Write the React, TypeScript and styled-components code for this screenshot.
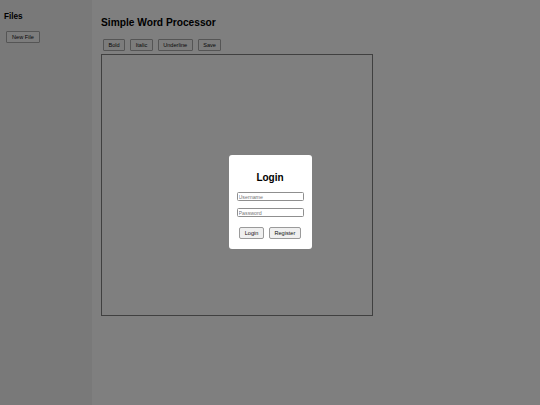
import styled, { createGlobalStyle } from "styled-components";

const GlobalStyle = createGlobalStyle`
  html, body {
    margin: 0;
    padding: 0;
    font-family: "Liberation Sans", Arial, sans-serif;
  }
`;

const Layout = styled.div`
  display: flex;
  height: 100vh;
  background: #ffffff;
`;

const Sidebar = styled.aside`
  width: 92px;
  flex-shrink: 0;
  display: flex;
  flex-direction: column;
  align-items: flex-start;
  padding: 0 4px;
  box-sizing: border-box;
  background: #f2f2f2;
`;

const SidebarTitle = styled.h3`
  font-size: 8.2px;
  line-height: 10px;
  font-weight: 700;
  margin: 12px 0 9px 0;
  color: #000;
`;

const Button = styled.button<{ $light?: boolean }>`
  height: 12px;
  padding: 0 4.5px;
  font-family: "Liberation Sans", Arial, sans-serif;
  font-size: 5.6px;
  line-height: 10px;
  color: #111;
  background: ${(p) => (p.$light ? "#efefef" : "#f8f8f8")};
  border: 1px solid ${(p) => (p.$light ? "#9a9a9a" : "#aaaaaa")};
  border-radius: ${(p) => (p.$light ? "2px" : "1px")};
  cursor: pointer;
`;

const NewFileButton = styled(Button)`
  margin-left: 2px;
  padding: 0 5px;
`;

const Main = styled.main`
  flex: 1;
  display: flex;
  flex-direction: column;
  align-items: flex-start;
  padding: 0 9px;
`;

const Title = styled.h1`
  font-size: 10.2px;
  line-height: 12px;
  font-weight: 700;
  margin: 17px 0 10px 0;
  color: #000;
`;

const Toolbar = styled.div`
  display: flex;
  gap: 5px;
  padding-left: 2px;
  margin-bottom: 3px;
`;

const Editor = styled.div`
  width: 272px;
  height: 262px;
  box-sizing: border-box;
  border: 1px solid #808080;
`;

const Overlay = styled.div`
  position: fixed;
  inset: 0;
  background: rgba(0, 0, 0, 0.5);
  display: flex;
  align-items: center;
  justify-content: center;
`;

const Modal = styled.div`
  width: 83px;
  box-sizing: border-box;
  padding: 8px 8px 10px 8px;
  margin-top: -1px;
  background: #ffffff;
  border-radius: 3px;
  display: flex;
  flex-direction: column;
  align-items: center;
`;

const ModalTitle = styled.h2`
  font-size: 10px;
  line-height: 12px;
  font-weight: 700;
  margin: 9px 0 8px 0;
  color: #000;
`;

const Input = styled.input<{ $gap?: number }>`
  width: 100%;
  height: 9px;
  box-sizing: border-box;
  margin-bottom: ${(p) => p.$gap ?? 0}px;
  padding: 0 1px;
  font-family: "Liberation Sans", Arial, sans-serif;
  font-size: 5.3px;
  border: 1px solid #8f8f8f;
  border-radius: 1.5px;
  outline: none;
  &::placeholder {
    color: #777;
  }
`;

const ButtonRow = styled.div`
  display: flex;
  gap: 5px;
  margin-top: 10px;
`;

const App = () => {
  const tools = ["Bold", "Italic", "Underline", "Save"];

  return (
    <>
      <GlobalStyle />
      <Layout>
        <Sidebar>
          <SidebarTitle>Files</SidebarTitle>
          <NewFileButton>New File</NewFileButton>
        </Sidebar>
        <Main>
          <Title>Simple Word Processor</Title>
          <Toolbar>
            {tools.map((tool) => (
              <Button key={tool}>{tool}</Button>
            ))}
          </Toolbar>
          <Editor />
        </Main>
      </Layout>
      <Overlay>
        <Modal>
          <ModalTitle>Login</ModalTitle>
          <Input placeholder="Username" $gap={7} />
          <Input type="password" placeholder="Password" />
          <ButtonRow>
            <Button $light>Login</Button>
            <Button $light>Register</Button>
          </ButtonRow>
        </Modal>
      </Overlay>
    </>
  );
};

export default App;
